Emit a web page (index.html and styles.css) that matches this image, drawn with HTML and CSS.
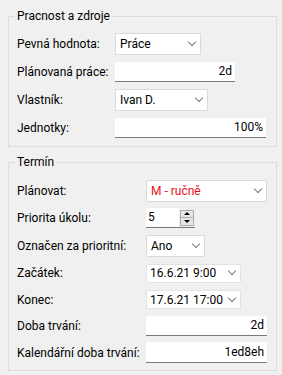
FILE: index.html
```html
<!DOCTYPE html>
<html lang="cs">
<head>
    <meta charset="UTF-8">
    <title>Vlastnosti úkolu</title>
    <link rel="stylesheet" href="styles.css">
</head>
<body>
<div class="page">
    <fieldset class="group group-work">
        <legend>Pracnost a zdroje</legend>
        <div class="row">
            <span class="label">Pevná hodnota:</span>
            <div class="combo w86"><span>Práce</span><i class="chev"></i></div>
        </div>
        <div class="row">
            <span class="label">Plánovaná práce:</span>
            <div class="edit w120">2d</div>
        </div>
        <div class="row">
            <span class="label">Vlastník:</span>
            <div class="combo w93"><span>Ivan D.</span><i class="chev"></i></div>
        </div>
        <div class="row">
            <span class="label">Jednotky:</span>
            <div class="edit w151">100%</div>
        </div>
    </fieldset>

    <fieldset class="group group-term">
        <legend>Termín</legend>
        <div class="row">
            <span class="label">Plánovat:</span>
            <div class="combo w121"><span class="red">M - ručně</span><i class="chev"></i></div>
        </div>
        <div class="row tall">
            <span class="label">Priorita úkolu:</span>
            <div class="spin">
                <div class="spin-text">5</div>
                <div class="spin-btns">
                    <span class="up"></span>
                    <span class="down"></span>
                </div>
            </div>
        </div>
        <div class="row">
            <span class="label">Označen za prioritní:</span>
            <div class="combo w59"><span>Ano</span><i class="chev"></i></div>
        </div>
        <div class="row tall">
            <span class="label">Začátek:</span>
            <div class="combo date w95"><span>16.6.21 9:00</span><i class="chev"></i></div>
        </div>
        <div class="row short">
            <span class="label">Konec:</span>
            <div class="combo date w95"><span>17.6.21 17:00</span><i class="chev"></i></div>
        </div>
        <div class="row">
            <span class="label">Doba trvání:</span>
            <div class="edit w121">2d</div>
        </div>
        <div class="row">
            <span class="label">Kalendářní doba trvání:</span>
            <div class="edit w121 h21">1ed8eh</div>
        </div>
    </fieldset>
</div>
</body>
</html>
```

FILE: styles.css
```css
*{
    margin: 0;
    padding: 0;
    box-sizing: border-box;
}
body{
    background: #f0f0f0;
    font-family: Roboto, "Noto Sans", sans-serif;
    font-size: 12px;
    color: #000;
}
.page{
    padding: 8px 5px 0 8px;
}
.group{
    border: 1px solid #dcdcdc;
    padding: 6px 8px 4px 6px;
}
.group legend{
    padding: 0 2px;
    line-height: 16px;
}
.group-term{
    margin-top: 7px;
    padding-top: 7px;
}
.row{
    display: flex;
    align-items: center;
    height: 28px;
    padding-left: 2px;
}
.group-term .row{
    height: 27px;
}
.group-term .row.tall{
    height: 28px;
}
.group-term .row.short{
    height: 25px;
}
.label{
    flex: none;
    width: 98px;
    white-space: nowrap;
}
.group-term .label{
    width: 129px;
}
.combo{
    display: flex;
    align-items: center;
    justify-content: space-between;
    height: 22px;
    padding: 0 5px 0 4px;
    background: #fff;
    border: 1px solid #d9d9d9;
    border-radius: 1px;
}
.combo.date{
    height: 19px;
    padding-left: 3px;
    border-color: #e3e3e3;
}
.chev{
    width: 6px;
    height: 6px;
    border-right: 1px solid #7a7a7a;
    border-bottom: 1px solid #7a7a7a;
    transform: translateY(-2px) rotate(45deg);
}
.red{
    color: #e81123;
}
.edit{
    height: 20px;
    line-height: 19px;
    padding-right: 3px;
    text-align: right;
    background: #fff;
    border-bottom: 1px solid #7a7a7a;
}
.edit.h21{
    height: 21px;
    line-height: 20px;
}
.w59{ width: 59px; }
.w86{ width: 86px; }
.w93{ width: 93px; }
.w95{ width: 95px; }
.w120{ width: 120px; }
.w121{ width: 121px; }
.w151{ width: 151px; }
.spin{
    display: flex;
    align-items: center;
    width: 49px;
    height: 20px;
    border-bottom: 1px solid #7a7a7a;
}
.spin-text{
    width: 33px;
    height: 19px;
    line-height: 19px;
    padding-left: 2px;
    background: #fff;
}
.spin-btns{
    display: flex;
    flex-direction: column;
    width: 14px;
    height: 16px;
    margin-left: 1px;
    border: 1px solid #adadad;
    background: #e6e6e6;
}
.spin-btns span{
    flex: 1;
    display: flex;
    align-items: center;
    justify-content: center;
}
.spin-btns .up{
    border-bottom: 1px solid #adadad;
}
.spin-btns .up::before{
    content: "";
    border-left: 3px solid transparent;
    border-right: 3px solid transparent;
    border-bottom: 3px solid #000;
}
.spin-btns .down::before{
    content: "";
    border-left: 3px solid transparent;
    border-right: 3px solid transparent;
    border-top: 3px solid #000;
}
```
